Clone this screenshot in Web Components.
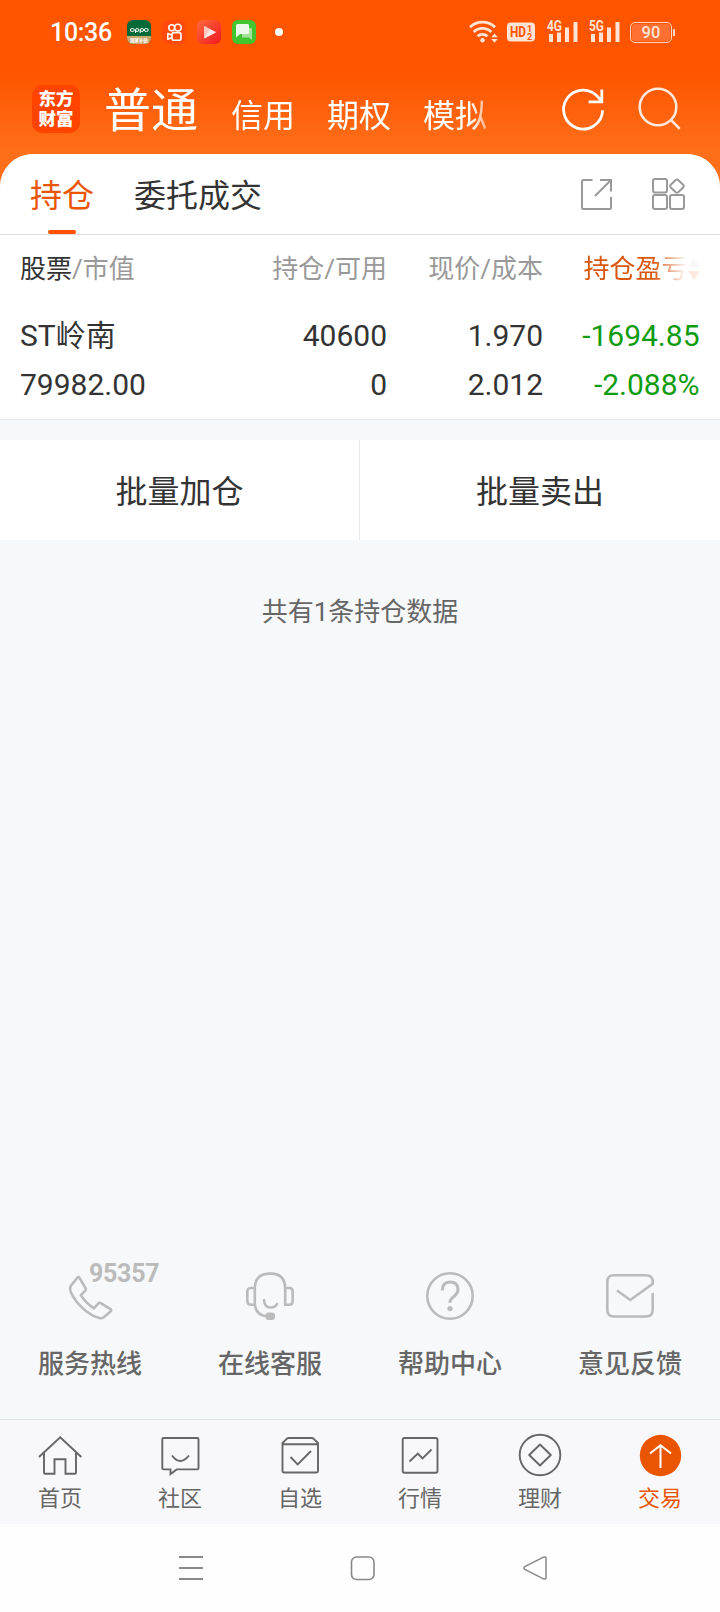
<!DOCTYPE html>
<html lang="zh-CN">
<head>
<meta charset="utf-8" />
<title>交易</title>
<style>
  body {
    margin: 0;
    font-family: Roboto, "Noto Sans CJK SC", sans-serif;
    color: #333;
  }
</style>
</head>
<body>
<trade-app></trade-app>
<script>
const ICONS = {
  oppo: [24, 24, `<defs><clipPath id="c"><rect width="24" height="24" rx="6"/></clipPath></defs>
    <g clip-path="url(#c)"><rect width="24" height="24" fill="#046a38"/><rect y="16" width="24" height="8" fill="#c9a76c"/></g>
    <g fill="none" stroke="#fff" stroke-width="1"><ellipse cx="5.3" cy="10" rx="2" ry="1.5"/><path d="M8.500 13V10M13.200 13V10"/><ellipse cx="10.2" cy="10" rx="1.700" ry="1.5"/><ellipse cx="14.900" cy="10" rx="1.700" ry="1.5"/><ellipse cx="19.300" cy="10" rx="2" ry="1.5"/></g>
    <text x="12" y="22.2" font-size="4.4" font-weight="700" fill="#fff" text-anchor="middle">国家补贴</text>`],
  kuai: [24, 24, `<rect width="24" height="24" rx="6" fill="#ff4a0c"/>
    <g fill="none" stroke="#fff" stroke-width="1.6"><circle cx="9.8" cy="7.8" r="3"/><circle cx="15.9" cy="7.6" r="3.4"/><rect x="10" y="12.6" width="9" height="7.6" rx="2"/><path d="M10 15.3 5.8 13.6v5.6L10 17.6" stroke-linejoin="round"/></g>`],
  video: [24, 24, `<defs><linearGradient id="g" x2="1" y2="1"><stop stop-color="#ff6a3c"/><stop offset="1" stop-color="#f01820"/></linearGradient></defs>
    <rect width="24" height="24" rx="6" fill="url(#g)"/><path d="M7.5 6.500v11.600l11-5.800z" fill="#ffc9c0" stroke="#ffc9c0" stroke-linejoin="round"/><path d="m7.5 18 5-8.500 6 2.800z" fill="#fff" opacity=".6"/>`],
  sms: [24, 24, `<rect width="24" height="24" rx="6" fill="#42c52e"/><path d="M10 8h9q1 0 1 1v11l-3-2.500h-7z" fill="#a5e29b"/>
    <path d="M5.5 4h10q1.500 0 1.500 1.500v7q0 1.500-1.500 1.500H8l-4 3.500v-12Q4 4 5.500 4z" fill="#ecfbe9"/>`],
  wifi: [30, 24, `<g fill="none" stroke="#ffe3d4" stroke-width="2.8"><path d="M1 7.200a18 18 0 0 1 25 0"/><path d="M4.700 12a12.500 12.500 0 0 1 17.600 0"/><path d="M8.500 16.300a7.200 7.200 0 0 1 10 0"/></g>
    <circle cx="13.500" cy="20.300" r="2.200" fill="#ffe3d4"/><path d="m25.500 13.500 3.300 3.800h-6.600zM22.200 19h6.600l-3.300 3.700z" fill="#ffe3d4"/>`],
  hd: [28, 20, `<rect width="28" height="19" y=".5" rx="4" fill="#ffe3d4"/>
    <g fill="#ff5500" font-weight="700"><text x="3" y="15" font-size="14.500" textLength="16" lengthAdjust="spacingAndGlyphs">HD</text><text x="20" y="9.500" font-size="9">1</text><text x="20" y="18" font-size="9">2</text></g>`],
  search: [44, 44, `<g fill="none" stroke="#ffe8dc" stroke-width="2.600"><circle cx="20" cy="20" r="18.300"/><path d="m32.600 32.600 9.200 9.200"/></g>`],
  refresh: [44, 44, `<g fill="none" stroke="#fff" stroke-width="2.800"><path d="M41.600 23.200A19.500 19.500 0 1 1 37.200 10.200L41 14.200"/><path d="M40.800 2.500v12.300H27.600"/></g>`],
  share: [32, 32, `<g fill="none" stroke="#999" stroke-width="2"><path d="M12.500 2H3.500Q2 2 2 3.500v26q0 1.500 1.500 1.500h26q1.500 0 1.500-1.500V19"/><path d="M20 2h11v11.500M31 2 15 18"/></g>`],
  grid: [34, 34, `<g fill="none" stroke="#999" stroke-width="2"><rect x="2" y="2" width="14" height="13.500" rx="2"/><rect x="2" y="18" width="14" height="14" rx="2"/><rect x="19" y="18" width="14" height="14" rx="2"/><path d="m24.700 3-5.200 5q-1 1.200 0 2.200l5.200 5q1.300 1 2.500 0l5.200-5q1-1.200 0-2.200l-5.200-5q-1.200-1-2.500 0z"/></g>`],
  phone: [48, 48, `<path d="M13.300 6 6.500 14.500Q5 17 6.500 21 11 31.500 22.500 40.500 29 45.500 35.500 47q2.500.5 4.500-1.500l6.500-5.500q.8-1.300-.8-2.300L36 31.700q-1-.5-2 .5l-4.500 5Q21 31.500 16.500 24l4.700-5q.8-1-.2-2.300L15 6.500q-.8-1.200-1.700-.5z" fill="none" stroke="#bbb" stroke-width="2.600" transform="translate(-1.600 -.8)"/>`],
  service: [48, 48, `<g fill="none" stroke="#bbb" stroke-width="2.600"><path d="M8.800 33V17Q8.800 1.600 24 1.600h1Q39.200 1.600 39.200 17v15.700h4Q46.700 32.700 46.700 29V19q0-3-3.500-3h-4M8.800 16H5q-3.700 0-3.700 3.500V29q0 3.700 3.700 3.700h3.800q1.500 11.300 13 11.500"/><path d="M18 28q.5 7.500 6.800 7.500 4.500 0 6.200-3.500" stroke-linecap="round"/></g><rect x="19.500" y="40.500" width="9.500" height="7.500" rx="3" fill="#bbb"/>`],
  help: [48, 48, `<g fill="none" stroke="#bbb" stroke-width="2.600"><circle cx="24" cy="24" r="22.700"/><path d="M16.300 18.500Q16.300 10 24 10t8 7.500q0 3.500-3.500 6.500-4.700 3.500-4.700 6.700" stroke-width="3"/></g><circle cx="24" cy="36.500" r="2.600" fill="#bbb"/>`],
  mail: [48, 48, `<path d="M46.700 21v17q0 6.500-6.500 6.500H7.800q-6.500 0-6.500-6.500V10q0-6.700 6.500-6.700h32.400q5.500 0 6.500 5v3.500L24.300 28 11 18.500" fill="none" stroke="#bbb" stroke-width="2.600"/>`],
  home: [44, 44, `<path d="M1 24 22.200 4.200 43.300 24M6 20v19.500q0 1.300 1.300 1.300h9.200V26.200h11v14.600h9.200q1.300 0 1.300-1.300V20" fill="none" stroke="#666" stroke-width="1.900"/>`],
  chat: [44, 44, `<path d="M5.500 5h33.800q1.200 0 1.200 1.200v29q0 1.200-1.200 1.200H18.700L12.500 41v-4.600h-7q-1.200 0-1.200-1.200v-29Q4.300 5 5.500 5zM14 22.500q8 11 17 0" fill="none" stroke="#666" stroke-width="1.900"/>`],
  pick: [44, 44, `<path d="m4.500 10 4.200-4.200q.8-.8 2-.8h23q1.200 0 2 .8L40 10v28q0 1.500-1.500 1.500H6.200q-1.700 0-1.700-1.500zM5 11.200h34.500M12.500 24l7.200 7.300L33 18" fill="none" stroke="#666" stroke-width="1.900"/>`],
  quote: [44, 44, `<rect x="4.700" y="5" width="34.800" height="34.700" rx="1.800" fill="none" stroke="#666" stroke-width="1.900"/><path d="m11.500 28.500 8.300-8 4.700 5 9-9" fill="none" stroke="#666" stroke-width="1.900"/>`],
  wealth: [44, 44, `<circle cx="22" cy="22" r="20.300" fill="none" stroke="#666" stroke-width="1.900"/><path d="M22 11.500 32.800 22 22 32.500 11.200 22z" fill="none" stroke="#666" stroke-width="1.900" stroke-linejoin="round"/>`],
  trade: [44, 44, `<circle cx="22.500" cy="22.500" r="20.700" fill="#ea5504"/><path d="M22.500 35V12M12 20.500l10.500-8.300L33 20.500" fill="none" stroke="#fff" stroke-width="2"/>`],
  menu: [26, 26, `<path d="M1 2h24M1 13h24M1 24h24" stroke="#888" stroke-width="1.800"/>`],
  square: [26, 26, `<rect x="1.500" y="2" width="22.500" height="22.500" rx="5" fill="none" stroke="#888" stroke-width="1.600"/>`],
  back: [26, 26, `<path d="M21.500 2.200 2.800 11.700q-1.700 1.300 0 2.600l18.700 9.500q2.500 1 2.500-1.300v-19q0-2.300-2.500-1.300z" fill="none" stroke="#888" stroke-width="1.500"/>`],
};

class UiIcon extends HTMLElement {
  constructor() {
    super();
    this.attachShadow({ mode: "open" });
  }
  connectedCallback() {
    const [w, h, body] = ICONS[this.getAttribute("name")];
    this.shadowRoot.innerHTML = `
      <style>
      :host { display: block; flex: none; width: ${w}px; height: ${h}px; }
      svg { display: block; overflow: visible; }
      </style>
      <svg width="${w}" height="${h}" viewBox="0 0 ${w} ${h}">${body}</svg>`;
  }
}

// 信号格：制式文字叠在左侧两格上方
class SignalBars extends HTMLElement {
  constructor() {
    super();
    this.attachShadow({ mode: "open" }).innerHTML = `
      <style>
      :host { display: block; flex: none; width: 31px; height: 24px; }
      svg { display: block; overflow: visible; }
      </style>
      <svg width="31" height="24" fill="#ffe3d4">
        <text x="0" y="11" font-size="14" font-weight="700" textLength="15" lengthAdjust="spacingAndGlyphs">${this.dataset.net}</text>
        <path d="M2 14h4v8H2zM10 12.500h4V22h-4zM18 7.500h4V22h-4zM26.500 2h4v20h-4z"/>
      </svg>`;
  }
}

class StatusBar extends HTMLElement {
  constructor() {
    super();
    this.attachShadow({ mode: "open" }).innerHTML = `
      <style>
      :host { display: flex; align-items: center; height: 64px; padding: 0 45px 0 50px; box-sizing: border-box; color: #fff; }
      .time { width: 77px; font-size: 25px; font-weight: 500; letter-spacing: -.3px; line-height: 30px; padding-top: 2px; box-sizing: border-box; }
      .apps { display: flex; gap: 11px; }
      .dot { width: 8px; height: 8px; border-radius: 50%; background: #fff; margin-left: 19px; }
      .right { display: flex; align-items: center; margin-left: auto; }
      .battery { display: flex; align-items: center; margin-left: 10px; }
      .cell { width: 42px; height: 21px; box-sizing: border-box; border: 1.500px solid #ffd5bd; border-radius: 5px; background: #ff7032; box-shadow: inset 0 0 0 1px #ff5500; color: #ffe3d4; font-size: 16.500px; font-weight: 500; line-height: 20px; text-align: center; }
      .cap { width: 2px; height: 7px; margin-left: 1px; background: #ffd5bd; }
      </style>
      <span class="time">10:36</span>
      <div class="apps">
        <ui-icon name="oppo"></ui-icon><ui-icon name="kuai"></ui-icon>
        <ui-icon name="video"></ui-icon><ui-icon name="sms"></ui-icon>
      </div>
      <span class="dot"></span>
      <div class="right">
        <ui-icon name="wifi"></ui-icon>
        <ui-icon name="hd" style="margin: 0 12px 0 8px"></ui-icon>
        <signal-bars data-net="4G" style="margin-right: 11px"></signal-bars>
        <signal-bars data-net="5G"></signal-bars>
        <div class="battery"><span class="cell">90</span><span class="cap"></span></div>
      </div>`;
  }
}

class AppHeader extends HTMLElement {
  constructor() {
    super();
    this.attachShadow({ mode: "open" }).innerHTML = `
      <style>
      :host { display: flex; height: 90px; padding: 0 38px 0 32px; box-sizing: border-box; color: #fff; }
      .logo { width: 48px; height: 48px; margin-top: 21px; border-radius: 10px; background: #ff4400; font-size: 17.500px; font-weight: 900; line-height: 20px; text-align: center; padding: 4px 6px; box-sizing: border-box; }
      nav { display: flex; align-items: baseline; height: 90px; margin-left: 25px; font-size: 32px; line-height: 94px; gap: 32px; width: 385px; overflow: hidden; white-space: nowrap; -webkit-mask: linear-gradient(90deg, #000 366px, rgba(0,0,0,.35) 385px); mask: linear-gradient(90deg, #000 366px, rgba(0,0,0,.35) 385px); }
      b { font-size: 47px; font-weight: 400; margin-left: -1px; margin-right: 1px; }
      .icons { display: flex; gap: 33px; margin: 23px 0 0 auto; }
      </style>
      <div class="logo">东方财富</div>
      <nav><b>普通</b><span>信用</span><span>期权</span><span>模拟</span></nav>
      <div class="icons"><ui-icon name="refresh"></ui-icon><ui-icon name="search"></ui-icon></div>`;
  }
}

class TabStrip extends HTMLElement {
  constructor() {
    super();
    this.attachShadow({ mode: "open" }).innerHTML = `
      <style>
      :host { display: flex; height: 81px; padding: 0 35px 0 30px; box-sizing: border-box; border-bottom: 1px solid #ddd; font-size: 32px; line-height: 84px; }
      .tab { margin-right: 40px; height: 80px; }
      .on { color: #ea5504; display: flex; flex-direction: column; align-items: center; }
      .on::after { content: ""; width: 28px; height: 4px; margin-top: -8px; border-radius: 2px; background: #ff5000; }
      .icons { display: flex; align-items: center; gap: 39px; margin-left: auto; }
      </style>
      <span class="tab on">持仓</span><span class="tab">委托成交</span>
      <div class="icons"><ui-icon name="share"></ui-icon><ui-icon name="grid"></ui-icon></div>`;
  }
}

class HoldingTable extends HTMLElement {
  constructor() {
    super();
    this.attachShadow({ mode: "open" }).innerHTML = `
      <style>
      :host { display: block; height: 185px; padding: 1px 20px 0; box-sizing: border-box; border-bottom: 1px solid #e8e8e8; }
      .head, .row { display: grid; grid-template-columns: 210px 157px 156px 156.500px; text-align: right; white-space: nowrap; }
      .head { height: 75px; color: #999; font-size: 26px; line-height: 66px; }
      .row { font-size: 30px; line-height: 49px; }
      .head > :first-child, .row > :first-child { text-align: left; }
      .name { color: #333; }
      .sort { display: flex; justify-content: flex-end; align-items: center; height: 66px; color: #d9560f; }
      .sort span { -webkit-mask: linear-gradient(90deg, #000 70px, transparent 104px); mask: linear-gradient(90deg, #000 70px, transparent 104px); }
      .green { color: #109c10; }
      </style>
      <div class="head">
        <span><span class="name">股票</span>/市值</span><span>持仓/可用</span><span>现价/成本</span>
        <div class="sort"><span>持仓盈亏</span><svg width="12" height="22"><path d="M6 0l6 9H0z" fill="#f8f8f8"/><path d="M0 13h12l-6 9z" fill="#fee9e0"/></svg></div>
      </div>
      <div class="row"><span>ST岭南</span><span>40600</span><span>1.970</span><span class="green">-1694.85</span></div>
      <div class="row"><span>79982.00</span><span>0</span><span>2.012</span><span class="green">-2.088%</span></div>`;
  }
}

class BatchActions extends HTMLElement {
  constructor() {
    super();
    this.attachShadow({ mode: "open" }).innerHTML = `
      <style>
      :host { display: flex; height: 100px; margin-top: 20px; background: #fff; font-size: 32px; line-height: 104px; text-align: center; }
      ::slotted(*) { width: 360px; box-sizing: border-box; height: 100px; }
      ::slotted(:first-child) { border-right: 1px solid #e6e8ea; }
      </style>
      <slot></slot>`;
  }
}

class ServiceItem extends HTMLElement {
  constructor() {
    super();
    const { icon, tag } = this.dataset;
    this.attachShadow({ mode: "open" }).innerHTML = `
      <style>
      :host { display: flex; flex-direction: column; align-items: center; flex: 1; color: #666; font-size: 26px; font-weight: 500; line-height: 38px; }
      .pic { position: relative; margin-bottom: 25px; }
      .tag { position: absolute; left: 23px; top: -12px; color: #bbb; font-size: 25px; font-weight: 700; line-height: 28px; letter-spacing: -.3px; }
      </style>
      <div class="pic"><ui-icon name="${icon}"></ui-icon>${tag ? `<span class="tag">${tag}</span>` : ""}</div>
      <slot></slot>`;
  }
}

class TabItem extends HTMLElement {
  constructor() {
    super();
    this.attachShadow({ mode: "open" }).innerHTML = `
      <style>
      :host { display: flex; flex-direction: column; align-items: center; flex: 1; padding-top: 13px; color: #666; font-size: 22px; line-height: 32px; }
      :host([active]) { color: #ea5504; }
      ui-icon { margin-bottom: 6px; }
      </style>
      <ui-icon name="${this.dataset.icon}"></ui-icon><slot></slot>`;
  }
}

class TradeApp extends HTMLElement {
  constructor() {
    super();
    this.attachShadow({ mode: "open" }).innerHTML = `
      <style>
      :host { display: flex; flex-direction: column; height: 1612px; width: 720px; overflow: hidden; background: linear-gradient(#ff5500 75px, #ff6e19 150px); }
      .page { flex: 1; display: flex; flex-direction: column; background: #f7f8fa; border-radius: 33px 33px 0 0; overflow: hidden; }
      .card { background: #fff; }
      .total { margin-top: 53px; text-align: center; font-size: 26px; line-height: 38px; color: #666; }
      .services { display: flex; margin-top: auto; height: 147px; }
      .tabs { display: flex; height: 105px; box-sizing: border-box; border-top: 1px solid #e0e2e4; background: #f8f8fa; }
      .system { display: flex; justify-content: center; gap: 146px; height: 88px; padding-left: 6px; box-sizing: border-box; align-items: center; background: #fefefe; }
      </style>
      <status-bar></status-bar>
      <app-header></app-header>
      <div class="page">
        <div class="card"><tab-strip></tab-strip><holding-table></holding-table></div>
        <batch-actions><span>批量加仓</span><span>批量卖出</span></batch-actions>
        <div class="total">共有1条持仓数据</div>
        <div class="services">
          <service-item data-icon="phone" data-tag="95357">服务热线</service-item>
          <service-item data-icon="service">在线客服</service-item>
          <service-item data-icon="help">帮助中心</service-item>
          <service-item data-icon="mail">意见反馈</service-item>
        </div>
        <div class="tabs">
          <tab-item data-icon="home">首页</tab-item>
          <tab-item data-icon="chat">社区</tab-item>
          <tab-item data-icon="pick">自选</tab-item>
          <tab-item data-icon="quote">行情</tab-item>
          <tab-item data-icon="wealth">理财</tab-item>
          <tab-item data-icon="trade" active>交易</tab-item>
        </div>
        <div class="system"><ui-icon name="menu"></ui-icon><ui-icon name="square"></ui-icon><ui-icon name="back"></ui-icon></div>
      </div>`;
  }
}

customElements.define("ui-icon", UiIcon);
customElements.define("signal-bars", SignalBars);
customElements.define("status-bar", StatusBar);
customElements.define("app-header", AppHeader);
customElements.define("tab-strip", TabStrip);
customElements.define("holding-table", HoldingTable);
customElements.define("batch-actions", BatchActions);
customElements.define("service-item", ServiceItem);
customElements.define("tab-item", TabItem);
customElements.define("trade-app", TradeApp);
</script>
</body>
</html>
